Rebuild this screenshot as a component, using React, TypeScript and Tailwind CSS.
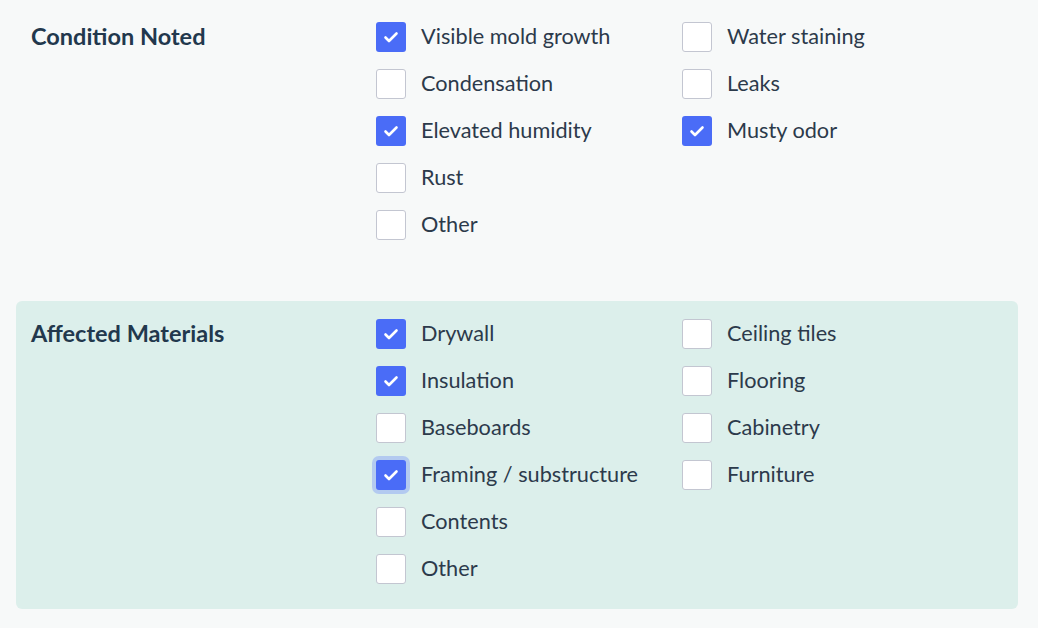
import React from 'react';

type Item = { label: string; checked?: boolean; focused?: boolean };

function Box({ item }: { item: Item }) {
  return (
    <label className="flex h-[30px] items-center gap-[15px]">
      <span
        className={
          'flex h-[30px] w-[30px] shrink-0 items-center justify-center rounded-[3px] ' +
          (item.checked ? 'bg-[#4a6cf7]' : 'border border-[#c3c6d1] bg-white') +
          (item.focused ? ' ring-4 ring-[#b3caf0]' : '')
        }
      >
        {item.checked && (
          <svg width="16" height="16" viewBox="0 0 16 16" fill="none">
            <path d="M2.5 8.5L6 12L13.5 4.5" stroke="white" strokeWidth="2.6" strokeLinecap="round" strokeLinejoin="round" />
          </svg>
        )}
      </span>
      <span className="pb-[2px] text-[21.7px] text-[#2c3a4b]">{item.label}</span>
    </label>
  );
}

function Section({ title, cols, className }: { title: string; cols: Item[][]; className: string }) {
  return (
    <section className={'ml-4 mr-5 flex rounded-md px-[15px] ' + className}>
      <h2 className="w-[345px] shrink-0 text-[23.5px] leading-[28px] font-bold text-[#22384d]">{title}</h2>
      <div className="flex">
        {cols.map((col, i) => (
          <div key={i} className="flex w-[306px] flex-col gap-[17px]">
            {col.map((it) => (
              <Box key={it.label} item={it} />
            ))}
          </div>
        ))}
      </div>
    </section>
  );
}

export default function App() {
  return (
    <div className="min-h-[628px] bg-[#f7f9f9] pt-[4px] font-['Lato',sans-serif]">
      <Section
        title="Condition Noted"
        className="pt-[18px] pb-[24px]"
        cols={[
          [
            { label: 'Visible mold growth', checked: true },
            { label: 'Condensation' },
            { label: 'Elevated humidity', checked: true },
            { label: 'Rust' },
            { label: 'Other' },
          ],
          [{ label: 'Water staining' }, { label: 'Leaks' }, { label: 'Musty odor', checked: true }],
        ]}
      />
      <Section
        title="Affected Materials"
        className="mt-[37px] bg-[#dcefeb] pt-[18px] pb-[25px]"
        cols={[
          [
            { label: 'Drywall', checked: true },
            { label: 'Insulation', checked: true },
            { label: 'Baseboards' },
            { label: 'Framing / substructure', checked: true, focused: true },
            { label: 'Contents' },
            { label: 'Other' },
          ],
          [{ label: 'Ceiling tiles' }, { label: 'Flooring' }, { label: 'Cabinetry' }, { label: 'Furniture' }],
        ]}
      />
    </div>
  );
}
